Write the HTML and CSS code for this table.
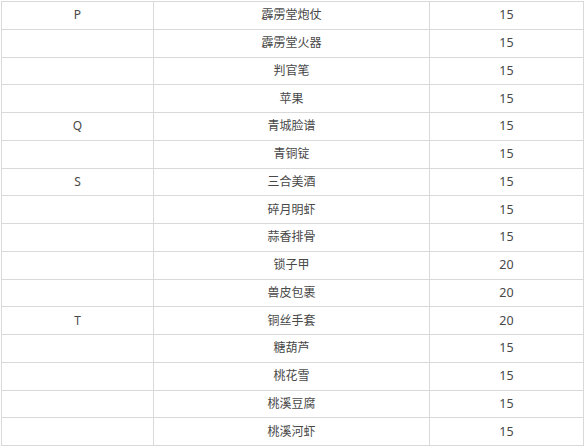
FILE: index.html
```html
<!DOCTYPE html>
<html lang="zh">
<head>
<meta charset="utf-8">
<title>物品表</title>
<link rel="stylesheet" href="styles.css">
</head>
<body>
<table class="items">
  <colgroup>
    <col class="c-letter">
    <col class="c-name">
    <col class="c-num">
  </colgroup>
  <tbody>
    <tr><td>P</td><td>霹雳堂炮仗</td><td class="num">15</td></tr>
    <tr><td></td><td>霹雳堂火器</td><td class="num">15</td></tr>
    <tr><td></td><td>判官笔</td><td class="num">15</td></tr>
    <tr><td></td><td>苹果</td><td class="num">15</td></tr>
    <tr><td>Q</td><td>青城脸谱</td><td class="num">15</td></tr>
    <tr><td></td><td>青铜锭</td><td class="num">15</td></tr>
    <tr><td>S</td><td>三合美酒</td><td class="num">15</td></tr>
    <tr><td></td><td>碎月明虾</td><td class="num">15</td></tr>
    <tr><td></td><td>蒜香排骨</td><td class="num">15</td></tr>
    <tr><td></td><td>锁子甲</td><td class="num">20</td></tr>
    <tr><td></td><td>兽皮包裹</td><td class="num">20</td></tr>
    <tr><td>T</td><td>铜丝手套</td><td class="num">20</td></tr>
    <tr><td></td><td>糖葫芦</td><td class="num">15</td></tr>
    <tr><td></td><td>桃花雪</td><td class="num">15</td></tr>
    <tr><td></td><td>桃溪豆腐</td><td class="num">15</td></tr>
    <tr><td></td><td>桃溪河虾</td><td class="num">15</td></tr>
  </tbody>
</table>
</body>
</html>
```

FILE: styles.css
```css
html, body {
  margin: 0;
  padding: 0;
  background: #ffffff;
}

body {
  padding: 1px 0 0 1px;
  font-family: "Noto Sans", "Noto Sans CJK SC", sans-serif;
  color: #484848;
}

.items {
  border-collapse: collapse;
  table-layout: fixed;
  width: 582px;
}

.c-letter { width: 152px; }
.c-name { width: 276px; }
.c-num { width: 154px; }

.items td {
  border: 1px solid #d9d9d9;
  height: 26.75px;
  padding: 0;
  text-align: center;
  vertical-align: middle;
  font-size: 12px;
  line-height: 14px;
}

.items td.num {
  font-size: 12.5px;
}
```
